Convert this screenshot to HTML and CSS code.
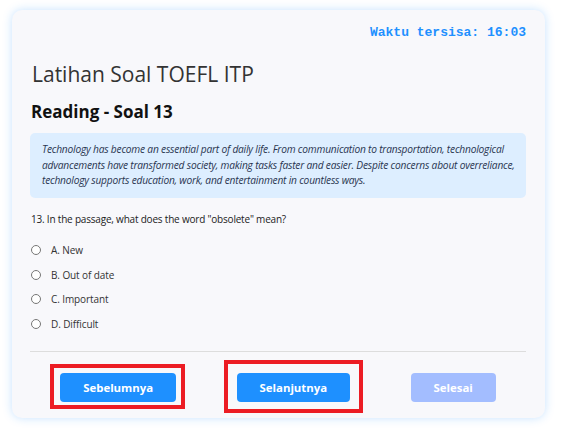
FILE: index.html
```html
<!DOCTYPE html>
<html lang="id">
<head>
    <meta charset="UTF-8">
    <meta name="viewport" content="width=device-width, initial-scale=1.0">
    <title>Latihan Soal TOEFL ITP</title>
    <link rel="stylesheet" href="styles.css">
</head>
<body>
    <div class="container">
        <div class="timer">Waktu tersisa: <span id="time">16:03</span></div>
        <h1>Latihan Soal TOEFL ITP</h1>
        <h2>Reading - Soal 13</h2>
        <div class="passage">
            Technology has become an essential part of daily life. From communication to transportation, technological advancements have transformed society, making tasks faster and easier. Despite concerns about overreliance, technology supports education, work, and entertainment in countless ways.
        </div>
        <p class="question">13. In the passage, what does the word "obsolete" mean?</p>
        <div class="options">
            <label class="option"><input type="radio" name="answer" value="A"> A. New</label>
            <label class="option"><input type="radio" name="answer" value="B"> B. Out of date</label>
            <label class="option"><input type="radio" name="answer" value="C"> C. Important</label>
            <label class="option"><input type="radio" name="answer" value="D"> D. Difficult</label>
        </div>
        <div class="nav">
            <button class="btn mark-1">Sebelumnya</button>
            <button class="btn mark-2">Selanjutnya</button>
            <button class="btn" disabled>Selesai</button>
        </div>
    </div>
</body>
</html>
```

FILE: styles.css
```css
body {
    font-family: "Open Sans", sans-serif;
    margin: 0;
    padding: 10px 16px 14px 12px;
    background: #fff;
}
.container {
    background: #f8f8fb;
    border-radius: 10px;
    padding: 15px 19px 16px 18px;
    box-shadow: 0 0 10px rgba(30, 144, 255, 0.25);
}
.timer {
    text-align: right;
    font-family: "Liberation Mono", monospace;
    font-weight: bold;
    font-size: 13px;
    line-height: 16px;
    color: #1e90ff;
}
h1 {
    font-size: 21px;
    line-height: 26px;
    font-weight: normal;
    color: #333;
    margin: 20px 0 0 2px;
}
h2 {
    font-size: 17px;
    line-height: 22px;
    font-weight: bold;
    color: #111;
    margin: 14px 0 0 1px;
}
.passage {
    background: #ddeeff;
    border-radius: 5px;
    padding: 9px 3px 9px 12px;
    margin-top: 10px;
    font-size: 10.2px;
    letter-spacing: -0.2px;
    font-style: italic;
    line-height: 15.5px;
    color: #2a3550;
}
.question {
    font-size: 10px;
    letter-spacing: -0.2px;
    line-height: 14px;
    color: #222;
    margin: 14px 0 12px 1px;
}
.options {
    display: flex;
    flex-direction: column;
}
.option {
    display: flex;
    align-items: center;
    gap: 10px;
    height: 24.7px;
    font-size: 10px;
    letter-spacing: -0.1px;
    color: #333;
}
.option input {
    margin: 0 0 0 1px;
    width: 10px;
    height: 10px;
}
.nav {
    display: flex;
    justify-content: space-around;
    border-top: 1px solid #ddd;
    margin-top: 15px;
    padding-top: 21px;
}
.btn {
    position: relative;
    font-family: "Open Sans", sans-serif;
    background: #1e90ff;
    color: #fff;
    font-weight: bold;
    font-size: 11.4px;
    border: none;
    border-radius: 4px;
    height: 29px;
    padding: 0 23px;
    cursor: pointer;
}
.btn:disabled {
    background: #a3bdff;
}
/* red annotation frames */
.mark-1::after,
.mark-2::after {
    content: "";
    position: absolute;
    border: 4px solid #ec1c24;
}
.mark-1::after {
    inset: -9px -9px -7px -10px;
}
.mark-2::after {
    inset: -13px -13px -11px -13px;
}
```
